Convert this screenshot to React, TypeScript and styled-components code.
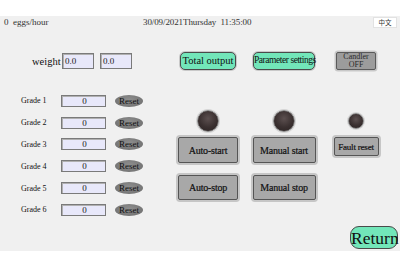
import React from 'react';
import styled, { createGlobalStyle, css } from 'styled-components';

const GlobalStyle = createGlobalStyle`
  html, body {
    margin: 0;
    padding: 0;
    background: #ffffff;
  }
  body {
    font-family: "Liberation Serif", "Times New Roman", serif;
    color: #1a1a1a;
  }
`;

const Page = styled.div`
  width: 400px;
  height: 267px;
  padding-top: 16px;
  box-sizing: border-box;
  background: #ffffff;
`;

const Screen = styled.div`
  height: 235px;
  background: #f0f0f0;
  display: flex;
  flex-direction: column;
`;

const StatusBar = styled.div`
  height: 12px;
  display: flex;
  align-items: center;
  font-size: 9px;
  color: #333;
  padding-left: 4px;
  padding-right: 3px;
`;

const Rate = styled.span`
  width: 139px;
  white-space: pre;
`;

const Clock = styled.span`
  flex: 1;
  white-space: pre;
  letter-spacing: -0.1px;
`;

const LangButton = styled.button`
  width: 24px;
  height: 11px;
  margin-top: 1px;
  padding: 0;
  border: 1px solid #e2e2e2;
  background: #fff;
  font-family: "Noto Sans CJK SC", sans-serif;
  font-size: 6.5px;
  line-height: 9px;
  color: #333;
`;

const Body = styled.div`
  display: flex;
  margin-top: 24px;
`;

const LeftColumn = styled.div`
  width: 170px;
  display: flex;
  flex-direction: column;
`;

const WeightRow = styled.div`
  height: 18px;
  display: flex;
  align-items: center;
  padding-left: 32px;
  gap: 6px;
`;

const FieldLabel = styled.span`
  font-size: 10.5px;
  width: 24px;
  color: #111;
`;

const Field = styled.div<{ $w: number; $h: number; $center?: boolean }>`
  width: ${p => p.$w}px;
  height: ${p => p.$h}px;
  box-sizing: border-box;
  background: #e8e8fa;
  border: 1px solid #7a7a7a;
  box-shadow: inset 1px 1px 0 #b0b0b0;
  font-size: 9px;
  line-height: ${p => p.$h - 2}px;
  padding-left: 2px;
  text-align: ${p => (p.$center ? 'center' : 'left')};
  color: #222;
`;

const GradeList = styled.div`
  margin-top: 20px;
  display: flex;
  flex-direction: column;
`;

const GradeRow = styled.div`
  height: 21.8px;
  display: flex;
  align-items: center;
  padding-left: 21px;
`;

const GradeLabel = styled.span`
  width: 40px;
  font-size: 8px;
  color: #111;
`;

const ResetPill = styled.button`
  margin-left: 9px;
  width: 28px;
  height: 12px;
  padding: 0;
  border: none;
  border-radius: 50%;
  background: radial-gradient(ellipse at 50% 40%, #8e8e8e, #6c6c6c);
  font-family: "Liberation Serif", serif;
  font-size: 9px;
  line-height: 12px;
  color: #111;
`;

const RightColumn = styled.div`
  display: flex;
  flex-direction: column;
`;

const ControlRow = styled.div<{ $top: number; $h: number; $align?: string }>`
  display: grid;
  grid-template-columns: 76px 76px 68px;
  justify-items: center;
  align-items: ${p => p.$align ?? 'center'};
  height: ${p => p.$h}px;
  margin-top: ${p => p.$top}px;
`;

const PillButton = styled.button<{ $w: number; $tone: 'green' | 'gray'; $size?: number; $track?: number }>`
  width: ${p => p.$w}px;
  height: 18px;
  padding: 0;
  border-radius: 5px;
  font-family: "Liberation Serif", serif;
  font-size: ${p => p.$size ?? 10}px;
  letter-spacing: ${p => p.$track ?? 0}px;
  color: #111;
  line-height: 1;
  white-space: nowrap;
  ${p =>
    p.$tone === 'green'
      ? css`
          background: #72e6b9;
          border: 1.5px solid #4a4a4a;
          box-shadow: 0 0 0 1px #c9c9c9;
        `
      : css`
          background: #9c9c9c;
          border: 1.5px solid #5a5a5a;
          border-radius: 2px;
          box-shadow: 0 0 0 1.5px #c8c8c8;
          font-size: 8px;
          line-height: 8px;
          color: #2a2a2a;
          overflow: hidden;
        `}
`;

const Light = styled.div<{ $r: number }>`
  width: ${p => p.$r * 2}px;
  height: ${p => p.$r * 2}px;
  box-sizing: border-box;
  border-radius: 50%;
  border: 1.5px solid #8a8a8a;
  box-shadow: 0 0 0 1px #d4d4d4;
  background: radial-gradient(circle at 50% 38%, #5c5050 0%, #3a3030 55%, #2a2222 100%);
`;

const ControlButton = styled.button<{ $w: number; $h: number; $size: number }>`
  width: ${p => p.$w}px;
  height: ${p => p.$h}px;
  padding: 0;
  box-sizing: border-box;
  background: #a8a8a8;
  border: 1.5px solid #555;
  border-radius: 2px;
  box-shadow: 0 0 0 2px #c6c6c6;
  font-family: "Liberation Serif", serif;
  font-size: ${p => p.$size}px;
  color: #111;
  white-space: nowrap;
  letter-spacing: -0.2px;
  -webkit-text-stroke: 0.2px #111;
`;

const Footer = styled.div`
  margin-top: auto;
  display: flex;
  justify-content: flex-end;
  padding: 0 2px 2px 0;
`;

const ReturnButton = styled.button`
  width: 48px;
  height: 23px;
  padding: 0;
  background: #72e6b9;
  border: 1.5px solid #4a4a4a;
  border-radius: 9px;
  font-family: "Liberation Serif", serif;
  font-size: 17.5px;
  line-height: 20px;
  color: #111;
`;

const grades = [1, 2, 3, 4, 5, 6];

export default function App() {
  return (
    <>
      <GlobalStyle />
      <Page>
        <Screen>
          <StatusBar>
            <Rate>{'0  eggs/hour'}</Rate>
            <Clock>{'30/09/2021Thursday  11:35:00'}</Clock>
            <LangButton>中文</LangButton>
          </StatusBar>

          <Body>
            <LeftColumn>
              <WeightRow>
                <FieldLabel>weight</FieldLabel>
                <Field $w={32} $h={16}>0.0</Field>
                <Field $w={32} $h={16}>0.0</Field>
              </WeightRow>
              <GradeList>
                {grades.map(g => (
                  <GradeRow key={g}>
                    <GradeLabel>Grade {g}</GradeLabel>
                    <Field $w={45} $h={12} $center>0</Field>
                    <ResetPill>Reset</ResetPill>
                  </GradeRow>
                ))}
              </GradeList>
            </LeftColumn>

            <RightColumn>
              <ControlRow $top={0} $h={18}>
                <PillButton $w={56} $tone="green" $size={10.5}>Total output</PillButton>
                <PillButton $w={62} $tone="green" $size={9.5} $track={-0.45}>Parameter settings</PillButton>
                <PillButton $w={40} $tone="gray">Candler<br />OFF</PillButton>
              </ControlRow>

              <ControlRow $top={40} $h={22}>
                <Light $r={11} />
                <Light $r={11} />
                <Light $r={8} />
              </ControlRow>

              <ControlRow $top={5} $h={26} $align="start">
                <ControlButton $w={60} $h={26} $size={10}>Auto-start</ControlButton>
                <ControlButton $w={63} $h={26} $size={10}>Manual start</ControlButton>
                <ControlButton $w={45} $h={19} $size={9}>Fault reset</ControlButton>
              </ControlRow>

              <ControlRow $top={12} $h={25} $align="start">
                <ControlButton $w={60} $h={25} $size={10}>Auto-stop</ControlButton>
                <ControlButton $w={63} $h={25} $size={10}>Manual stop</ControlButton>
              </ControlRow>
            </RightColumn>
          </Body>

          <Footer>
            <ReturnButton>Return</ReturnButton>
          </Footer>
        </Screen>
      </Page>
    </>
  );
}
